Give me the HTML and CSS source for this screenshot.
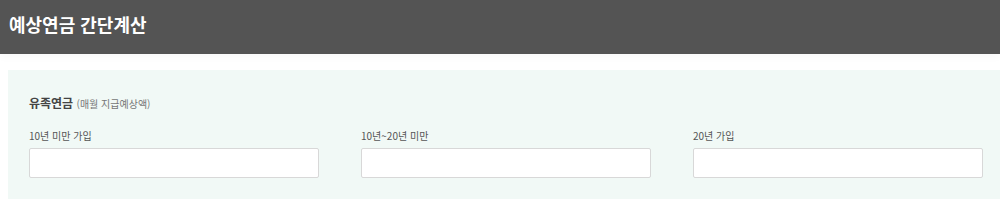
FILE: index.html
```html
<!DOCTYPE html>
<html lang="ko">
<head>
  <meta charset="UTF-8">
  <title>예상연금 간단계산</title>
  <link rel="stylesheet" href="styles.css">
</head>
<body>

<div class="top-bar">
  <h1>예상연금 간단계산</h1>
</div>

<div class="calc-box">
  <h2>유족연금 <small>(매월 지급예상액)</small></h2>
  <div class="fields">
    <div class="field">
      <label for="under10">10년 미만 가입</label>
      <input type="text" id="under10">
    </div>
    <div class="field">
      <label for="under20">10년~20년 미만</label>
      <input type="text" id="under20">
    </div>
    <div class="field">
      <label for="over20">20년 가입</label>
      <input type="text" id="over20">
    </div>
  </div>
</div>

</body>
</html>
```

FILE: styles.css
```css
* {
  box-sizing: border-box;
  margin: 0;
  padding: 0;
}
body {
  background: #fff;
  font-family: "Noto Sans CJK KR", "Noto Sans", sans-serif;
  color: #333;
}
.top-bar {
  height: 54px;
  background: #545454;
  padding: 11px 0 0 9px;
  box-shadow: 0 3px 8px rgba(0,0,0,0.03);
}
.top-bar h1 {
  font-size: 18px;
  line-height: 26px;
  font-weight: 700;
  color: #fff;
}
.calc-box {
  margin: 16px 0 0 8px;
  background: #f1f9f6;
  padding: 24px 0 21px 21px;
}
.calc-box h2 {
  font-size: 12px;
  line-height: 18px;
  font-weight: 700;
  color: #444;
}
.calc-box h2 small {
  font-size: 10px;
  font-weight: 400;
  color: #777;
}
.fields {
  display: flex;
  gap: 42px;
  margin-top: 17px;
}
.field {
  width: 290px;
}
.field label {
  display: block;
  font-size: 10px;
  line-height: 12px;
  color: #555;
  margin-bottom: 6px;
}
.field input {
  width: 100%;
  height: 30px;
  border: 1px solid #d8d8d8;
  border-radius: 2px;
  background: #fff;
}
```
